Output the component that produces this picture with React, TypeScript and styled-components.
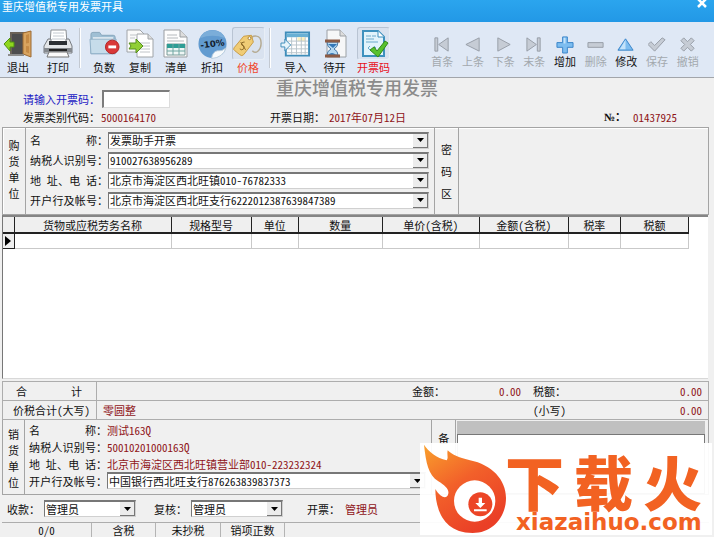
import React from "react";
import styled, { createGlobalStyle, css } from "styled-components";

const GlobalStyle = createGlobalStyle`
  * { box-sizing: border-box; }
  body {
    margin: 0;
    background: #f0f0f0;
    overflow: hidden;
  }
  body, button, input, select, textarea {
    font-family: "Noto Sans CJK SC", sans-serif;
    font-size: 11px;
    line-height: 16px;
    font-feature-settings: "hwid" 1;
    color: #111;
  }
`;

const RED = "#8f1418";

const Window = styled.div`
  display: flex;
  flex-direction: column;
  height: 100vh;
  position: relative;
`;

const TitleBar = styled.header`
  display: flex;
  justify-content: space-between;
  height: 22px;
  flex: none;
  padding: 0 2px;
  background: linear-gradient(#2ba5ee, #2298e6);
  color: #fff;
  line-height: 12px;
`;

const CloseButton = styled.button`
  width: 20px;
  height: 8px;
  padding: 0;
  border: 0;
  background: none;
  line-height: 0;
`;

const Toolbar = styled.nav`
  display: flex;
  flex: none;
  height: 56px;
  background: #dfe8f5;
  border-bottom: 1px solid #a2a5aa;
`;

const Group = styled.div<{ $gap?: number }>`
  display: flex;
  gap: ${(p) => p.$gap ?? 0}px;
`;

const Separator = styled.div`
  width: 2px;
  height: 40px;
  margin: 6px 5px 0 3px;
  background: #c3c9d1;
  border-right: 1px solid #fff;
`;

const ToolButton = styled.button<{ $width?: number; $color?: string }>`
  display: flex;
  flex-direction: column;
  align-items: center;
  width: ${(p) => p.$width ?? 36}px;
  padding: 5px 0 0;
  border: 0;
  background: none;
  white-space: nowrap;
  line-height: 14px;
  color: ${(p) => p.$color ?? "#111"};
`;

const IconFrame = styled.span<{ $pressed?: boolean }>`
  display: flex;
  justify-content: center;
  align-items: center;
  width: 33px;
  height: 33px;
  border: 1px solid transparent;
  ${(p) =>
    p.$pressed &&
    css`
      border-color: #b9c4d3 #e8eef6 #e8eef6 #b9c4d3;
      border-radius: 3px;
      background: #d9e2ef;
    `}
`;

const NavGroup = styled.div`
  display: flex;
  flex: 1;
  margin-left: 34px;
  padding-right: 11px;
`;

const NavButton = styled.button`
  flex: 1;
  display: flex;
  flex-direction: column;
  align-items: center;
  padding: 13px 0 0;
  border: 0;
  background: none;
  white-space: nowrap;
  line-height: 14px;
  color: #111;
  &:disabled {
    color: #a3a8ae;
  }
`;

const Heading = styled.h1`
  margin: 0;
  flex: none;
  text-align: center;
  font-size: 18px;
  line-height: 18px;
  height: 12px;
  font-weight: 500;
  color: #8b8b8b;
`;

const CodeRow = styled.div`
  display: flex;
  flex: none;
  align-items: center;
  height: 18px;
  padding-left: 23px;
`;

const CodeLabel = styled.label`
  width: 79px;
  color: #1a1ac4;
`;

const CodeInput = styled.input`
  width: 68px;
  height: 18px;
  padding: 0 2px;
  border: 1px solid;
  border-top-width: 2px;
  border-left-width: 2px;
  border-color: #7c7c7c #dcdcdc #dcdcdc #7c7c7c;
  background: #fff;
`;

const InfoRow = styled.div`
  display: grid;
  grid-template-columns: 247fr 334fr 110fr;
  flex: none;
  padding: 1px 0 0 23px;
  height: 19px;
`;

const Value = styled.span`
  color: ${RED};
`;

const NumberSign = styled.span`
  font-family: "Liberation Serif", "Noto Sans CJK SC", serif;
  font-weight: 700;
`;

const InfoPair = styled.div<{ $label: number }>`
  display: grid;
  grid-template-columns: ${(p) => p.$label}px 1fr;
  white-space: nowrap;
`;

const Panel = styled.section`
  display: flex;
  flex: none;
  margin: 0 5px 0 2px;
  border: 1px solid #a4a4a4;
  box-shadow: inset 1px 1px 0 #fff;
`;

const SideTitle = styled.div<{ $width: number; $pitch: number; $top?: number }>`
  display: flex;
  flex-direction: column;
  align-items: center;
  flex: none;
  width: ${(p) => p.$width}px;
  padding-top: ${(p) => p.$top ?? 0}px;
  border-right: 1px solid #a4a4a4;
  line-height: ${(p) => p.$pitch}px;
`;

const Fields = styled.div<{ $rowHeight: number; $top: number; $bottom?: number }>`
  display: grid;
  grid-auto-rows: ${(p) => p.$rowHeight}px;
  align-items: center;
  flex: 404 1 0;
  min-width: 0;
  padding: ${(p) => p.$top}px 5px ${(p) => p.$bottom ?? 0}px 4px;
  border-right: 1px solid #a4a4a4;
`;

const Field = styled.div`
  display: grid;
  grid-template-columns: 67px 11px 1fr;
  align-items: center;
`;

const FieldLabel = styled.label`
  text-align: justify;
  text-align-last: justify;
  white-space: nowrap;
`;

const FieldText = styled.span`
  color: ${RED};
`;

const Blank = styled.div`
  flex: 252 1 0;
`;

const ComboBox = styled.span<{ $width?: number }>`
  position: relative;
  display: flex;
  height: 17px;
  width: ${(p) => (p.$width ? p.$width + "px" : "100%")};
  border: 1px solid;
  border-top: 2px solid;
  border-color: #777 #d0d0d0 #d0d0d0 #777;
  background: #fff;
`;

const ComboSelect = styled.select`
  appearance: none;
  flex: 1;
  min-width: 0;
  padding: 0 14px 0 1px;
  border: 0;
  background: none;
  line-height: 13px;
  outline: 0;
`;

const ComboArrow = styled.span`
  position: absolute;
  right: 0;
  top: 0;
  bottom: 0;
  width: 15px;
  display: flex;
  align-items: center;
  justify-content: center;
  background: #ececec;
  border-right: 1px solid #777;
  border-bottom: 1px solid #777;
  pointer-events: none;
`;

const GridPanel = styled.section`
  flex: 1;
  min-height: 0;
  margin: 0 6px 2px 2px;
  background: #fff;
  border-top: 2px solid #858585;
  border-left: 1px solid #777;
  border-bottom: 1px solid #d8d8d8;
`;

const Grid = styled.table`
  width: calc(100% - 19px);
  table-layout: fixed;
  border-collapse: collapse;
`;

const HeadCell = styled.th`
  height: 16px;
  padding: 0;
  background: #efefef;
  border-right: 1px solid #222;
  border-bottom: 2px solid #222;
  font-weight: 400;
  line-height: 14px;
  white-space: nowrap;
`;

const BodyCell = styled.td`
  height: 15px;
  padding: 0;
  border-right: 1px solid #c9c9c9;
  border-bottom: 1px solid #c9c9c9;
`;

const MarkerCell = styled.td`
  padding: 0;
  background: #efefef;
  border-right: 1px solid #222;
  border-bottom: 1px solid #222;
  line-height: 0;
  text-align: center;
`;

const Totals = styled.section`
  flex: none;
  margin: 0 5px 0 2px;
  border: 1px solid #adadad;
  border-bottom: 0;
`;

const TotalRow = styled.div`
  display: grid;
  grid-template-columns: 94px 354fr 76fr 60fr 121fr;
  align-items: center;
  height: 19px;
  border-bottom: 1px solid #adadad;
`;

const TotalTitle = styled.div<{ $spread?: boolean }>`
  display: flex;
  justify-content: ${(p) => (p.$spread ? "space-between" : "flex-start")};
  align-items: center;
  height: 100%;
  padding: ${(p) => (p.$spread ? "0 14px 0 13px" : "0 0 0 10px")};
  border-right: 1px solid #adadad;
  white-space: nowrap;
`;

const TotalCell = styled.div<{ $right?: boolean; $red?: boolean }>`
  text-align: ${(p) => (p.$right ? "right" : "left")};
  color: ${(p) => (p.$red ? RED : "#111")};
  padding: 0 6px;
  white-space: nowrap;
`;

const SellerPanel = styled(Panel)`
  height: 75px;
  border-width: 0 1px 1px;
  box-shadow: none;
`;

const Memo = styled.div`
  display: flex;
  flex-direction: column;
  flex: 252 1 0;
  padding: 1px 3px 0 1px;
`;

const MemoHead = styled.div`
  height: 13px;
  background: #c0c0c0;
`;

const MemoText = styled.textarea`
  flex: 1;
  width: 100%;
  min-height: 0;
  resize: none;
  border: 1px solid #777;
  background: #fff;
`;

const SignRow = styled.div`
  display: flex;
  align-items: center;
  flex: none;
  height: 28px;
  margin: 0 5px 0 2px;
  padding-left: 5px;
  border-bottom: 1px solid #adadad;
`;

const SignItem = styled.div<{ $label: number; $after?: number }>`
  display: grid;
  grid-template-columns: ${(p) => p.$label}px auto;
  align-items: center;
  margin-right: ${(p) => p.$after ?? 0}px;
  white-space: nowrap;
`;

const StatusBar = styled.footer`
  display: flex;
  flex: none;
  height: 14px;
  padding-left: 2px;
  line-height: 14px;
`;

const StatusCell = styled.div<{ $width: number }>`
  width: ${(p) => p.$width}px;
  text-align: center;
  border-right: 1px solid #b4b4b4;
`;

const Badge = styled.aside`
  position: absolute;
  right: 2px;
  bottom: 2px;
  width: 292px;
  height: 92px;
  display: flex;
  background: rgba(255, 255, 255, 0.95);
  color: #f26222;
`;

const BadgeWords = styled.div`
  display: flex;
  flex-direction: column;
  padding-top: 10px;
  margin-left: -5px;
`;

const BadgeName = styled.strong`
  display: flex;
  gap: 10px;
  font-size: 59px;
  line-height: 56px;
  font-weight: 900;
`;

const BadgeSite = styled.span`
  padding: 2px 0 0 11px;
  font-family: "DejaVu Sans", sans-serif;
  font-weight: 700;
  font-size: 23px;
  line-height: 22px;
`;

const Exit = () => (
  <svg width="30" height="30" viewBox="0 0 30 30">
    <path d="M7 3h18v23H7z" fill="#6b6258" />
    <path d="M9 5h12v20H9z" fill="#4d4d4f" />
    <path d="M20 4l8-2v26l-8-3z" fill="#d9a45f" stroke="#9c6a34" />
    <path d="M23 6l3-1v9l-3 .5zM23 17l3 .3v7l-3-1.200z" fill="#c58a45" />
    <path d="M1 15l6-6v4h4v5H7v4z" fill="#8fd61f" stroke="#4f8f12" />
    <path d="M5 26h16" stroke="#8d8d8d" strokeWidth="2" />
  </svg>
);

const Printer = () => (
  <svg width="30" height="30" viewBox="0 0 30 30">
    <path d="M8 1h15l1 13H7z" fill="#fff" stroke="#8c9094" />
    <path d="M10 4h11M10 7h11M9 10h13" stroke="#c4cad0" />
    <path d="M5 10h3v4h15v-4h3l3 7v7H1v-7z" fill="#e4e6e8" stroke="#777b80" />
    <path d="M6 12h18v4H6z" fill="#2c2f33" />
    <path d="M1 19h28v4H1z" fill="#85898e" />
    <path d="M6 20h18v2H6z" fill="#222" />
    <path d="M6 23h18l2 5H4z" fill="#fafafa" stroke="#777" />
  </svg>
);

const Folder = () => (
  <svg width="32" height="30" viewBox="0 0 32 30">
    <path d="M2 5q0-2 2-2h7l2 3h12q2 0 2 2v17H2z" fill="#9fbfd4" stroke="#86a5bb" />
    <path d="M4 8h21v5H4z" fill="#e9f0f5" />
    <path d="M1 10h27l-1 15H2z" fill="#c6dcea" stroke="#8fb0c6" />
    <circle cx="24" cy="18" r="7" fill="#d93838" stroke="#b32424" />
    <path d="M20 16.500h8v3h-8z" fill="#fff" />
  </svg>
);

const Copy = () => (
  <svg width="30" height="30" viewBox="0 0 30 30">
    <path d="M2 1h13l4 4v18H2z" fill="#fafafa" stroke="#a0a4a8" />
    <path d="M12 5h11l5 5v18H12z" fill="#fff" stroke="#a0a4a8" />
    <path d="M23 5v5h5" fill="#ddd" stroke="#a0a4a8" />
    <path d="M15 14h10M15 17h10M15 20h10M15 23h10M5 6h6M5 9h5" stroke="#c0c4c8" />
    <path d="M4 14h7v-4l7 7-7 7v-4H4l2-3z" fill="#91cf35" stroke="#568f1d" />
  </svg>
);

const ListIcon = () => (
  <svg width="30" height="30" viewBox="0 0 30 30">
    <path d="M3 1h16l7 7v20H3z" fill="#fdfdfd" stroke="#999da1" />
    <path d="M19 1v7h7" fill="#ddd" stroke="#999da1" />
    <path d="M6 6h10M6 9h11M6 12h17" stroke="#b5b9bd" />
    <path d="M6 15h18v11H6z" fill="#eef6f5" stroke="#7a9a98" />
    <path d="M6 15h18v4H6z" fill="#2e9d95" />
    <path d="M6 22h18M12 15v11M18 15v11" stroke="#6fa6a2" />
  </svg>
);

const Discount = () => (
  <svg width="32" height="32" viewBox="0 0 32 32">
    <circle cx="16" cy="16" r="14.500" fill="#629bd0" />
    <path d="M3 10a14.500 14.500 0 0 1 26 0q-13-5-26 0z" fill="#7badd9" />
    <path d="M15 31q1-7 6-8 5 1 9-3-3 10-15 11z" fill="#f7fafc" stroke="#b8cbdc" />
    <text x="16" y="19" textAnchor="middle" transform="rotate(-8 16 16)" fontFamily="DejaVu Sans" fontWeight="700" fontSize="9" fill="#14202d">-10%</text>
  </svg>
);

const Tag = () => (
  <svg width="32" height="30" viewBox="0 0 32 30">
    <path d="M17 11C20 5 29 5 29 14c0 8-6 12-9 8" fill="none" stroke="#b5aa91" strokeWidth="1.500" />
    <path d="M1 19L11 7l8-1 2 7-10 13q-2 2-4 0l-5-4q-2-1-1-3z" fill="#f0cc75" stroke="#c79b45" />
    <circle cx="17" cy="9" r="1.500" fill="#fff" stroke="#a47d31" />
    <path d="M12 13q-4 0-3 3 4 1 2 4-2 2-4 0M8 13l5 8" fill="none" stroke="#8a6726" />
  </svg>
);

const Import = () => (
  <svg width="32" height="30" viewBox="0 0 32 30">
    <path d="M6 3h24v24H6z" fill="#fff" stroke="#3f8dba" strokeWidth="2" />
    <path d="M7 4h22v4H7z" fill="#69b0d4" />
    <path d="M18 8h8v4h-8z" fill="#fcf0c0" />
    <path d="M7 12h22M7 16h22M7 20h22M7 24h22M12 8v18M17 8v18M22 8v18M26 8v18" stroke="#b8c4ca" />
    <path d="M1 14h4v-4l6 6-6 6v-4H1z" fill="#e6f4fb" stroke="#3f8dba" />
  </svg>
);

const Pending = () => (
  <svg width="30" height="30" viewBox="0 0 30 30">
    <path d="M7 1h13l6 6v21H7z" fill="#f6f7f8" stroke="#9ba0a5" />
    <path d="M20 1v6h6" fill="#ddd" stroke="#9ba0a5" />
    <path d="M7 13h11q0 5-4 7 4 2 4 6H7q0-4 4-6-4-2-4-7z" fill="#b6d9f2" stroke="#487aa8" />
    <path d="M8 15h9l-4 4zM8 26q4-4 8 0z" fill="#3478b8" />
    <path d="M5 12h15M5 27h15" stroke="#8b5b45" strokeWidth="3" />
  </svg>
);

const InvoiceCode = () => (
  <svg width="30" height="30" viewBox="0 0 30 30">
    <path d="M4 2h15l6 6v19H4z" fill="#e2f3fb" stroke="#3e91be" strokeWidth="2" />
    <path d="M19 2v6h6" fill="#fff" stroke="#3e91be" />
    <path d="M7 7h5M13 7h4M7 10h8M7 13h12M11 17l-2 2 2 2M15 17l2 2-2 2" fill="none" stroke="#6caacb" />
    <path d="M11 21l4-3 3 4 8-10 3 2-10 14z" fill="#59c22d" stroke="#34891a" />
  </svg>
);

const navShapes: Record<string, string> = {
  首条: "M2 2h3v14H2zM16 2v14L6 9z",
  上条: "M16 2v14L2 9z",
  下条: "M3 2v14l13-7z",
  末条: "M2 2v14l10-7zM13 2h3v14h-3z",
  增加: "M7 1h5v6h6v5h-6v6H7v-6H1V7h6z",
  删除: "M1 7h16v5H1z",
  修改: "M9 3l8 12H1z",
  保存: "M0 9l3-3 4 4 8-8 3 2L7 16z",
  撤销: "M2 5l3-3 4 4 4-4 3 3-4 4 4 4-3 3-4-4-4 4-3-3 4-4z",
};

const NavIcon = ({ name, active }: { name: string; active: boolean }) => (
  <svg width="18" height="19" viewBox="0 0 19 18">
    <path
      d={navShapes[name]}
      fill={active ? "#7dbdf0" : "#c6ccd5"}
      stroke={active ? "#3682c8" : "#969da6"}
      strokeLinejoin="round"
    />
    {name === "修改" && <path d="M9 4v10H3z" fill="#c4e3fa" />}
    {name === "增加" && <path d="M8 2h2v6H2h6z" fill="#c4e3fa" />}
  </svg>
);

type Tool = { label: string; icon: React.ReactNode; color?: string; pressed?: boolean };

const groups: { width: number; gap: number; tools: Tool[] }[] = [
  {
    width: 36,
    gap: 4,
    tools: [
      { label: "退出", icon: <Exit /> },
      { label: "打印", icon: <Printer /> },
    ],
  },
  {
    width: 36,
    gap: 0,
    tools: [
      { label: "负数", icon: <Folder /> },
      { label: "复制", icon: <Copy /> },
      { label: "清单", icon: <ListIcon /> },
      { label: "折扣", icon: <Discount /> },
      { label: "价格", icon: <Tag />, color: "#f0482c", pressed: true },
    ],
  },
  {
    width: 39,
    gap: 0,
    tools: [
      { label: "导入", icon: <Import /> },
      { label: "待开", icon: <Pending /> },
      { label: "开票码", icon: <InvoiceCode />, color: "#e8101c", pressed: true },
    ],
  },
];

const Combo = ({ id, value, width }: { id: string; value: string; width?: number }) => (
  <ComboBox $width={width}>
    <ComboSelect id={id} defaultValue={value}>
      <option>{value}</option>
    </ComboSelect>
    <ComboArrow>
      <svg width="7" height="4" viewBox="0 0 7 4">
        <path d="M0 0h7L3.500 4z" fill="#000" />
      </svg>
    </ComboArrow>
  </ComboBox>
);

const labels = ["名 称", "纳税人识别号", "地 址、电 话", "开户行及帐号"];
const buyer = [
  "发票助手开票",
  "910027638956289",
  "北京市海淀区西北旺镇010-76782333",
  "北京市海淀区西北旺支行6222012387639847389",
];
const seller = ["测试163Q", "50010201000163Q", "北京市海淀区西北旺镇营业部010-223232324"];

const columns: [string, number][] = [
  ["货物或应税劳务名称", 157],
  ["规格型号", 80],
  ["单位", 47],
  ["数量", 84],
  ["单价(含税)", 97],
  ["金额(含税)", 89],
  ["税率", 52],
  ["税额", 68],
];

const status: [string, number][] = [
  ["0/0", 90],
  ["含税", 64],
  ["未抄税", 65],
  ["销项正数", 64],
];

export default function App() {
  return (
    <Window>
      <GlobalStyle />
      <TitleBar>
        <span>重庆增值税专用发票开具</span>
        <CloseButton aria-label="关闭">
          <svg width="10" height="8" viewBox="0 0 10 8">
            <path d="M1 -1l8 8M9 -1l-8 8" stroke="#fff" strokeWidth="2.500" />
          </svg>
        </CloseButton>
      </TitleBar>

      <Toolbar>
        {groups.map((group, i) => (
          <React.Fragment key={i}>
            {i > 0 && <Separator />}
            <Group $gap={group.gap}>
              {group.tools.map((t) => (
                <ToolButton key={t.label} $width={group.width} $color={t.color}>
                  <IconFrame $pressed={t.pressed}>{t.icon}</IconFrame>
                  {t.label}
                </ToolButton>
              ))}
            </Group>
          </React.Fragment>
        ))}
        <NavGroup>
          {Object.keys(navShapes).map((name) => {
            const active = name === "增加" || name === "修改";
            return (
              <NavButton key={name} disabled={!active}>
                <NavIcon name={name} active={active} />
                {name}
              </NavButton>
            );
          })}
        </NavGroup>
      </Toolbar>

      <Heading>重庆增值税专用发票</Heading>
      <CodeRow>
        <CodeLabel htmlFor="code">请输入开票码：</CodeLabel>
        <CodeInput id="code" />
      </CodeRow>
      <InfoRow>
        <InfoPair $label={78}>
          <span>发票类别代码：</span>
          <Value>5000164170</Value>
        </InfoPair>
        <InfoPair $label={59}>
          <span>开票日期：</span>
          <Value>2017年07月12日</Value>
        </InfoPair>
        <InfoPair $label={29}>
          <NumberSign>№：</NumberSign>
          <Value>01437925</Value>
        </InfoPair>
      </InfoRow>

      <Panel>
        <SideTitle $width={23} $pitch={16} $top={9}>
          {[..."购货单位"].map((c) => (
            <span key={c}>{c}</span>
          ))}
        </SideTitle>
        <Fields $rowHeight={20} $top={2} $bottom={4}>
          {buyer.map((value, i) => (
            <Field key={value}>
              <FieldLabel htmlFor={`buyer${i}`}>{labels[i]}</FieldLabel>
              <span>：</span>
              <Combo id={`buyer${i}`} value={value} />
            </Field>
          ))}
        </Fields>
        <SideTitle $width={24} $pitch={22} $top={10}>
          {[..."密码区"].map((c) => (
            <span key={c}>{c}</span>
          ))}
        </SideTitle>
        <Blank />
      </Panel>

      <GridPanel>
        <Grid>
          <colgroup>
            <col width={11} />
            {columns.map(([name, width]) => (
              <col key={name} width={width} />
            ))}
          </colgroup>
          <thead>
            <tr>
              <HeadCell />
              {columns.map(([name]) => (
                <HeadCell key={name}>{name}</HeadCell>
              ))}
            </tr>
          </thead>
          <tbody>
            <tr>
              <MarkerCell>
                <svg width="6" height="10" viewBox="0 0 6 10">
                  <path d="M0 0l6 5-6 5z" fill="#000" />
                </svg>
              </MarkerCell>
              {columns.map(([name]) => (
                <BodyCell key={name} />
              ))}
            </tr>
          </tbody>
        </Grid>
      </GridPanel>

      <Totals>
        <TotalRow>
          <TotalTitle $spread>
            <span>合</span>
            <span>计</span>
          </TotalTitle>
          <TotalCell $right>金额：</TotalCell>
          <TotalCell $right $red>0.00</TotalCell>
          <TotalCell>税额：</TotalCell>
          <TotalCell $right $red>0.00</TotalCell>
        </TotalRow>
        <TotalRow>
          <TotalTitle>价税合计(大写)</TotalTitle>
          <TotalCell $red>零圆整</TotalCell>
          <TotalCell />
          <TotalCell>(小写)</TotalCell>
          <TotalCell $right $red>0.00</TotalCell>
        </TotalRow>
      </Totals>

      <SellerPanel>
        <SideTitle $width={22} $pitch={16} $top={6}>
          {[..."销货单位"].map((c) => (
            <span key={c}>{c}</span>
          ))}
        </SideTitle>
        <Fields $rowHeight={17} $top={1}>
          {seller.map((value, i) => (
            <Field key={value}>
              <FieldLabel as="span">{labels[i]}</FieldLabel>
              <span>：</span>
              <FieldText>{value}</FieldText>
            </Field>
          ))}
          <Field>
            <FieldLabel htmlFor="bank">{labels[3]}</FieldLabel>
            <span>：</span>
            <Combo id="bank" value="中国银行西北旺支行876263839837373" />
          </Field>
        </Fields>
        <SideTitle $width={24} $pitch={36}>
          <span>备</span>
          <span>注</span>
        </SideTitle>
        <Memo>
          <MemoHead />
          <MemoText aria-label="备注" />
        </Memo>
      </SellerPanel>

      <SignRow>
        <SignItem $label={37} $after={18}>
          <label htmlFor="payee">收款：</label>
          <Combo id="payee" value="管理员" width={92} />
        </SignItem>
        <SignItem $label={37} $after={24}>
          <label htmlFor="checker">复核：</label>
          <Combo id="checker" value="管理员" width={92} />
        </SignItem>
        <SignItem $label={38}>
          <span>开票：</span>
          <Value>管理员</Value>
        </SignItem>
      </SignRow>

      <StatusBar>
        {status.map(([text, width]) => (
          <StatusCell key={text} $width={width}>
            {text}
          </StatusCell>
        ))}
      </StatusBar>

      <Badge>
        <svg width="90" height="92" viewBox="0 0 270 276">
          <defs>
            <linearGradient id="flame" x1="0" y1="0" x2="0.600" y2="1">
              <stop offset="0" stopColor="#f9a02c" />
              <stop offset="0.500" stopColor="#f2602a" />
              <stop offset="1" stopColor="#ea3f26" />
            </linearGradient>
          </defs>
          <path
            d="M12 5C18 60 25 95 55 115C75 128 90 140 84 155C80 168 62 165 46 138C46 190 65 270 158 270C220 270 258 220 258 165C258 110 215 65 150 52C120 45 95 35 83 22C80 35 86 45 80 52C50 45 25 25 12 5Z"
            fill="url(#flame)"
          />
          <circle cx="164" cy="174" r="62" fill="#fff" />
          <circle cx="181" cy="184" r="36" fill="#ec4526" />
          <path d="M176 164h10v16h10l-15 15-15-15h10zM162 199h38v6h-38z" fill="#fff" />
        </svg>
        <BadgeWords>
          <BadgeName>
            <span>下</span>
            <span>载</span>
            <span>火</span>
          </BadgeName>
          <BadgeSite>xiazaihuo.com</BadgeSite>
        </BadgeWords>
      </Badge>
    </Window>
  );
}
